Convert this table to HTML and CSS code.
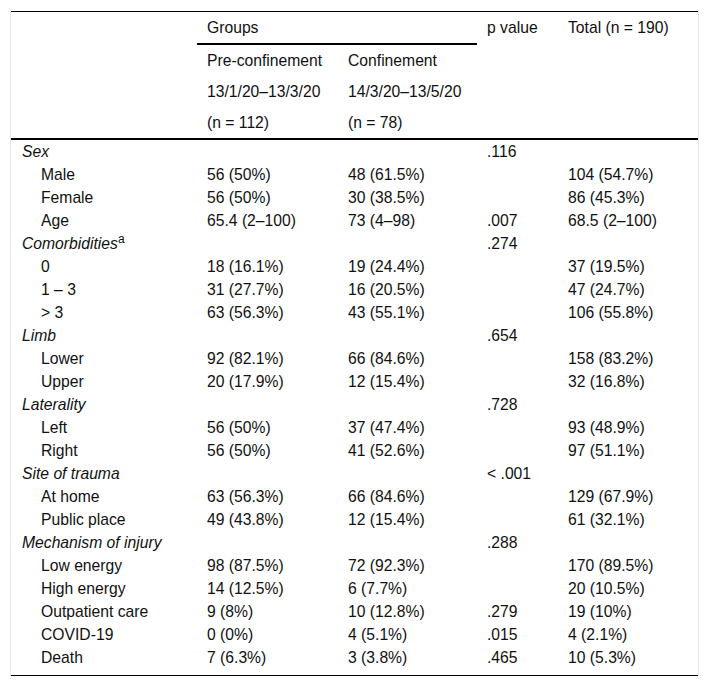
FILE: index.html
```html
<!DOCTYPE html>
<html lang="en">
<head>
<meta charset="utf-8">
<title>Table</title>
<link rel="stylesheet" href="styles.css">
</head>
<body>
<div class="frame">
<table class="data">
  <colgroup>
    <col class="c1"><col class="c2"><col class="c3"><col class="c4"><col class="c5">
  </colgroup>
  <thead>
    <tr class="hrow">
      <th class="blank last" rowspan="4"></th>
      <th class="groups" colspan="2">Groups</th>
      <th class="top last" rowspan="4">p value</th>
      <th class="top last" rowspan="4">Total (n = 190)</th>
    </tr>
    <tr class="hrow"><th>Pre-confinement</th><th>Confinement</th></tr>
    <tr class="hrow"><th>13/1/20–13/3/20</th><th>14/3/20–13/5/20</th></tr>
    <tr class="hrow"><th class="last">(n = 112)</th><th class="last">(n = 78)</th></tr>
  </thead>
  <tbody>
    <tr><td class="cat">Sex</td><td></td><td></td><td>.116</td><td></td></tr>
    <tr><td class="sub">Male</td><td>56 (50%)</td><td>48 (61.5%)</td><td></td><td>104 (54.7%)</td></tr>
    <tr><td class="sub">Female</td><td>56 (50%)</td><td>30 (38.5%)</td><td></td><td>86 (45.3%)</td></tr>
    <tr><td class="sub">Age</td><td>65.4 (2–100)</td><td>73 (4–98)</td><td>.007</td><td>68.5 (2–100)</td></tr>
    <tr><td class="cat">Comorbidities<sup>a</sup></td><td></td><td></td><td>.274</td><td></td></tr>
    <tr><td class="sub">0</td><td>18 (16.1%)</td><td>19 (24.4%)</td><td></td><td>37 (19.5%)</td></tr>
    <tr><td class="sub">1 – 3</td><td>31 (27.7%)</td><td>16 (20.5%)</td><td></td><td>47 (24.7%)</td></tr>
    <tr><td class="sub">&gt; 3</td><td>63 (56.3%)</td><td>43 (55.1%)</td><td></td><td>106 (55.8%)</td></tr>
    <tr><td class="cat">Limb</td><td></td><td></td><td>.654</td><td></td></tr>
    <tr><td class="sub">Lower</td><td>92 (82.1%)</td><td>66 (84.6%)</td><td></td><td>158 (83.2%)</td></tr>
    <tr><td class="sub">Upper</td><td>20 (17.9%)</td><td>12 (15.4%)</td><td></td><td>32 (16.8%)</td></tr>
    <tr><td class="cat">Laterality</td><td></td><td></td><td>.728</td><td></td></tr>
    <tr><td class="sub">Left</td><td>56 (50%)</td><td>37 (47.4%)</td><td></td><td>93 (48.9%)</td></tr>
    <tr><td class="sub">Right</td><td>56 (50%)</td><td>41 (52.6%)</td><td></td><td>97 (51.1%)</td></tr>
    <tr><td class="cat">Site of trauma</td><td></td><td></td><td>&lt; .001</td><td></td></tr>
    <tr><td class="sub">At home</td><td>63 (56.3%)</td><td>66 (84.6%)</td><td></td><td>129 (67.9%)</td></tr>
    <tr><td class="sub">Public place</td><td>49 (43.8%)</td><td>12 (15.4%)</td><td></td><td>61 (32.1%)</td></tr>
    <tr><td class="cat">Mechanism of injury</td><td></td><td></td><td>.288</td><td></td></tr>
    <tr><td class="sub">Low energy</td><td>98 (87.5%)</td><td>72 (92.3%)</td><td></td><td>170 (89.5%)</td></tr>
    <tr><td class="sub">High energy</td><td>14 (12.5%)</td><td>6 (7.7%)</td><td></td><td>20 (10.5%)</td></tr>
    <tr><td class="sub">Outpatient care</td><td>9 (8%)</td><td>10 (12.8%)</td><td>.279</td><td>19 (10%)</td></tr>
    <tr><td class="sub">COVID-19</td><td>0 (0%)</td><td>4 (5.1%)</td><td>.015</td><td>4 (2.1%)</td></tr>
    <tr class="endrow"><td class="sub">Death</td><td>7 (6.3%)</td><td>3 (3.8%)</td><td>.465</td><td>10 (5.3%)</td></tr>
  </tbody>
</table>
</div>
</body>
</html>
```

FILE: styles.css
```css
html, body {
  margin: 0;
  padding: 0;
  background: #fff;
}

.frame {
  margin: 10px 0 0 10px;
  width: 687px;
  padding-top: 1px;
  border-left: 1px solid #e6e6e6;
  border-right: 1px solid #e6e6e6;
}

.data {
  width: 687px;
  table-layout: fixed;
  border-collapse: separate;
  border-spacing: 0;
  border-top: 1px solid #000;
  border-bottom: 1px solid #000;
  font-family: "Liberation Sans", Arial, sans-serif;
  font-size: 15.7px;
  color: #111;
}

.c1 { width: 186px; }
.c2 { width: 141px; }
.c3 { width: 139px; }
.c4 { width: 81px; }
.c5 { width: 140px; }

.data th {
  font-weight: normal;
  text-align: left;
  padding: 0 0 0 10px;
  height: 31px;
  line-height: 31px;
  vertical-align: top;
  white-space: nowrap;
}

.data th.groups {
  border-bottom: 2px solid #000;
}

.data th.last {
  border-bottom: 2px solid #000;
}

.data td {
  padding: 0 0 0 10px;
  height: 23px;
  line-height: 23px;
  white-space: nowrap;
  vertical-align: top;
}

.data td.cat {
  font-style: italic;
  padding-left: 11px;
}

.data td.cat sup {
  font-style: normal;
  font-size: 12px;
  line-height: 0;
  vertical-align: 6px;
}

.data td.sub {
  padding-left: 30px;
}

.endrow td {
  padding-bottom: 6px;
}
```
